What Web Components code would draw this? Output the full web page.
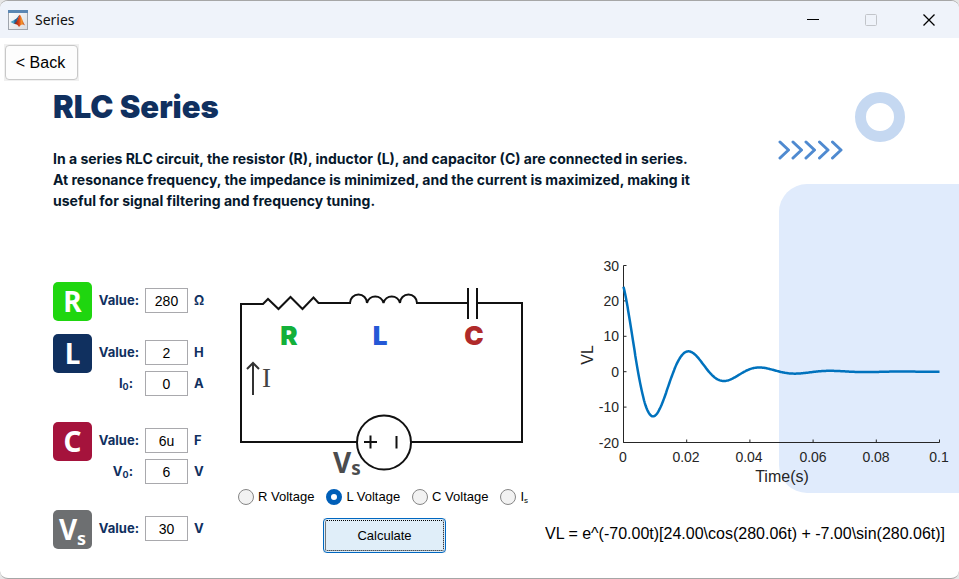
<!DOCTYPE html>
<html lang="en">
<head>
<meta charset="utf-8">
<title>Series</title>
<style>
  html, body { margin: 0; }
  body { background: #e6e6e6; font-family: "Liberation Sans", Arial, sans-serif; color: #000; }
</style>
</head>
<body>
<app-window>
  <title-bar slot="bar">Series</title-bar>
  <back-button>&lt; Back</back-button>
  <page-intro>
    <span slot="title">RLC Series</span>
    In a series RLC circuit, the resistor (R), inductor (L), and capacitor (C) are connected in series. At resonance frequency, the impedance is minimized, and the current is maximized, making it useful for signal filtering and frequency tuning.
  </page-intro>
  <rlc-workspace></rlc-workspace>
</app-window>

<script>
const define = (name, html, setup) => {
  const template = document.createElement("template");
  template.innerHTML = html;
  customElements.define(name, class extends HTMLElement {
    constructor() {
      super();
      this.attachShadow({ mode: "open" }).append(template.content.cloneNode(true));
    }
    connectedCallback() { if (setup) setup(this, this.shadowRoot); }
  });
};

define("title-bar", `
<style>
  :host { display: flex; align-items: center; height: 37px; padding-right: 1px; background: #eff3fa; font: 14px/20px "Noto Sans", sans-serif; color: #111; }
  .icon { margin: 0 7px 0 8px; }
  .name { flex: 1; }
  button { width: 58px; height: 36px; padding: 0; border: 0; background: none; display: grid; place-items: center; }
</style>
<svg class="icon" width="20" height="20" viewBox="0 0 20 20" aria-hidden="true">
  <defs>
    <linearGradient id="peak"><stop offset="0" stop-color="#7a1b12"/><stop offset=".45" stop-color="#d8431b"/><stop offset=".7" stop-color="#f59a2c"/><stop offset="1" stop-color="#b5301a"/></linearGradient>
    <linearGradient id="paper" x2="1" y2="1"><stop offset="0" stop-color="#fff"/><stop offset="1" stop-color="#d9dde2"/></linearGradient>
  </defs>
  <rect x=".5" y=".5" width="19" height="19" fill="url(#paper)" stroke="#9fa5ad"/>
  <rect x="0" y="0" width="20" height="3" fill="#5b87b3"/>
  <path d="M2.500 12 6.500 9.800 8.600 11.200 6.200 14Z" fill="#4ba3c7"/>
  <path d="M6.500 9.800C9 9 10 6 11.600 4.800L8.600 12.400 6.200 14Z" fill="#245f94"/>
  <path d="M11.600 4.800C13.200 5 14.500 11 17 15.500 15 13.800 13.200 14 11 17 10 15 8.300 13.800 6.200 14 9 13 10.400 6.500 11.600 4.800Z" fill="url(#peak)"/>
</svg>
<span class="name"><slot></slot></span>
<button aria-label="Minimize"><svg width="14" height="14"><path d="M1 6.500H13" stroke="#000"/></svg></button>
<button aria-label="Maximize" disabled><svg width="14" height="14"><rect x="1.500" y="1.500" width="11" height="11" rx="1" fill="none" stroke="#c2c5ca"/></svg></button>
<button aria-label="Close"><svg width="14" height="14"><path d="M1.500 1.500 12.500 12.500M12.500 1.500 1.500 12.500" stroke="#000" stroke-width="1.300"/></svg></button>
`);

define("app-window", `
<style>
  :host { display: flex; flex-direction: column; box-sizing: border-box; min-height: 100vh; position: relative; overflow: hidden; background: #fff; border: solid #a6a6a6; border-width: 1px 0; border-radius: 8px; }
  main { flex: 1; position: relative; padding: 6px 0 0; }
  page-backdrop { position: absolute; inset: 0; }
  .content { position: relative; }
</style>
<slot name="bar"></slot>
<main><page-backdrop></page-backdrop><div class="content"><slot></slot></div></main>
`);

define("page-backdrop", `
<style>
  .panel { position: absolute; right: 0; top: 146px; width: 180px; height: 309px; border-radius: 28px 0 0 28px; background: #e0ebfc; }
  .ring { position: absolute; right: 54px; top: 54px; width: 28px; height: 28px; border: 11px solid #c5d8f1; border-radius: 50%; }
  svg { position: absolute; right: 116px; top: 101px; }
</style>
<div class="panel"></div>
<div class="ring"></div>
<svg width="66" height="22" fill="none" stroke="#4f8ad0" stroke-width="3" stroke-linecap="round" stroke-linejoin="round" aria-hidden="true">
  <path d="M3 3 11.500 11 3 19M16 3 24.500 11 16 19M29 3 37.500 11 29 19M42.500 3 51 11 42.500 19M55.500 3 64 11 55.500 19"/>
</svg>
`);

define("back-button", `
<style>
  :host { display: block; width: 75px; margin-left: 4px; background: #f0f0f0; padding: 1px 0; }
  button { display: block; width: 73px; height: 35px; margin: 0 auto; padding: 0 2px 0 0; border: 1px solid #c8c8c8; border-radius: 4px; background: #fdfdfd; font: 16px "Liberation Sans", Arial, sans-serif; color: #000; }
</style>
<button><slot></slot></button>
`);

define("page-intro", `
<style>
  :host { display: block; padding: 7px 0 0 53px; }
  h1 { margin: 0; font: 900 31px/38px Inter, sans-serif; color: #10305f; }
  p { max-width: 648px; margin: 22px 0 0; font: 700 14px/21px Inter, sans-serif; color: #06182c; }
</style>
<h1><slot name="title"></slot></h1>
<p><slot></slot></p>
`);

define("rlc-workspace", `
<style>
  :host { display: grid; grid-template-columns: 183px 309px minmax(0, 1fr); padding: 39px 0 24px 53px; }
  .params { padding-top: 32px; }
  .params > * + * { margin-top: 26px; }
  .params > .near { margin-top: 13px; }
  .circuit { padding-top: 30px; }
</style>
<div class="params">
  <param-field color="#1fd60f" unit="Ω" value="280">R</param-field>
  <param-field class="near" color="#10305f" unit="H" value="2" initial="0" symbol="I" initial-unit="A">L</param-field>
  <param-field color="#a5133c" unit="F" value="6u" initial="6" symbol="V" initial-unit="V">C</param-field>
  <param-field color="#6d6f71" unit="V" value="30" sub="s">V</param-field>
</div>
<div class="circuit"><circuit-panel></circuit-panel></div>
<response-panel></response-panel>
`);

define("param-field", `
<style>
  :host { display: grid; grid-template-columns: 39px auto; column-gap: 6px; align-items: start; justify-content: start; font: 700 13px/25px Inter, sans-serif; color: #10305f; }
  .badge { height: 39px; border-radius: 5px; background: var(--badge); color: #fff; font: 700 28px/39px "Noto Sans", sans-serif; text-align: center; }
  .badge sub { font-size: 18px; line-height: 0; vertical-align: -5px; }
  .fields { display: grid; gap: 6px; padding-top: 6px; }
  .row { display: grid; grid-template-columns: 41px 43px auto; column-gap: 6px; justify-content: start; }
  label { text-align: right; white-space: nowrap; }
  label.short { padding-right: 6px; }
  label sub { font-size: 9px; line-height: 0; vertical-align: -2px; }
  input { box-sizing: border-box; width: 100%; height: 25px; padding: 0; border: 1px solid #a9a9ad; background: #fff; font: 14px "Liberation Sans", Arial, sans-serif; color: #000; text-align: center; border-radius: 0; }
</style>
<div class="badge"><slot></slot></div>
<div class="fields">
  <div class="row"><label for="value">Value:</label><input id="value"><span class="unit"></span></div>
</div>
`, (host, root) => {
  host.style.setProperty("--badge", host.getAttribute("color"));
  root.querySelector("input").value = host.getAttribute("value");
  root.querySelector(".unit").textContent = host.getAttribute("unit");
  if (host.hasAttribute("sub")) {
    const sub = document.createElement("sub");
    sub.textContent = host.getAttribute("sub");
    root.querySelector(".badge").append(sub);
  }
  if (host.hasAttribute("initial")) {
    const row = document.createElement("div");
    row.className = "row";
    row.innerHTML = `<label class="short" for="initial">${host.getAttribute("symbol")}<sub>0</sub>:</label><input id="initial"><span>${host.getAttribute("initial-unit")}</span>`;
    row.querySelector("input").value = host.getAttribute("initial");
    root.querySelector(".fields").append(row);
  }
});

define("circuit-panel", `
<style>
  :host { display: flex; flex-direction: column; gap: 13px; }
  .options { display: flex; gap: 12px; padding-left: 2px; font: 13px/16px "Liberation Sans", Arial, sans-serif; white-space: nowrap; }
  label { display: flex; gap: 4px; }
  label sub { font-size: 8px; line-height: 0; vertical-align: -2px; }
  input { appearance: none; box-sizing: border-box; width: 16px; height: 16px; margin: 0; border: 1px solid #868686; border-radius: 50%; background: #f2f2f2; }
  input:checked { border: 5px solid #005fb8; background: #fff; }
  .action { align-self: center; background: #f0f0f0; margin-right: 12px; }
  button { display: block; width: 123px; height: 35px; padding: 0; border: 1px solid #0067c0; border-radius: 4px; background: #e0eef9; font: 13px "Liberation Sans", Arial, sans-serif; color: #000; outline: 1px dotted #000; outline-offset: -3px; }
</style>
<circuit-diagram></circuit-diagram>
<div class="options" role="radiogroup" aria-label="Plotted quantity">
  <label><input type="radio" name="plot">R Voltage</label>
  <label><input type="radio" name="plot" checked>L Voltage</label>
  <label><input type="radio" name="plot">C Voltage</label>
  <label><input type="radio" name="plot"><span>I<sub>s</sub></span></label>
</div>
<div class="action"><button>Calculate</button></div>
`);

define("circuit-diagram", `
<style>
  :host { display: block; }
  svg { display: block; width: 100%; overflow: visible; }
  .name { font: 900 26px Inter, sans-serif; text-anchor: middle; }
</style>
<svg viewBox="236 280 309 196" role="img" aria-label="Series RLC circuit">
  <g fill="none" stroke="#111" stroke-width="2">
    <path d="M357 442H241V304H263L268 299 278.500 309 290.500 297 302.500 309 313.500 297.500 318.500 303H350A8.500 8.500 0 0 1 367 303A8.500 8.500 0 0 1 383.500 303A8.500 8.500 0 0 1 400 303A8.500 8.500 0 0 1 417 303H467"/>
    <path d="M478 303H522V442H411M468 288V319M477 288V319"/>
    <circle cx="384" cy="442.500" r="27"/>
    <path d="M364 442H377M370.500 435.500V448.500M396.500 436V448.500"/>
    <path d="M253 395V363M247 369 253 363 259 369" stroke="#333"/>
  </g>
  <text class="name" x="289" y="345" fill="#13b03a">R</text>
  <text class="name" x="380" y="345" fill="#2458d6">L</text>
  <text class="name" x="474" y="345" fill="#b02a2a">C</text>
  <text x="262" y="387" font-family="Liberation Serif, serif" font-size="27" fill="#444">I</text>
  <text x="333" y="473" font-family="Noto Sans, sans-serif" font-weight="700" font-size="28" fill="#4b4c4e">V<tspan font-size="19" dy="2">s</tspan></text>
</svg>
`);

define("response-panel", `
<style>
  :host { display: flex; flex-direction: column; gap: 34px; min-width: 0; overflow: hidden; }
  output { font: 16px/20px "Liberation Sans", Arial, sans-serif; white-space: nowrap; }
</style>
<response-chart></response-chart>
<output>VL = e^(-70.00t)[24.00\\cos(280.06t) + -7.00\\sin(280.06t)]</output>
`);

define("response-chart", `
<style>
  :host { display: block; }
  svg { display: block; width: 100%; font: 14px "Liberation Sans", Arial, sans-serif; fill: #262626; }
  .axis { fill: none; stroke: #262626; }
  .curve { fill: none; stroke: #0072bd; stroke-width: 2.5; stroke-linejoin: round; }
  .title { font-size: 16px; text-anchor: middle; }
</style>
<svg viewBox="0 0 414 240" role="img" aria-label="VL over time"></svg>
`, (host, root) => {
  const left = 78.5, top = 15.5, width = 316, height = 177;
  const px = t => left + t / 0.1 * width;
  const py = v => top + (30 - v) / 50 * height;
  let axis = `M${left} ${top}V${top + height}H${left + width}`, texts = "";
  for (let v = -20; v <= 30; v += 10) {
    axis += `M${left} ${py(v)}h3`;
    texts += `<text x="74" y="${Math.round(py(v)) + 5}" text-anchor="end">${v}</text>`;
  }
  for (const t of [0, 0.02, 0.04, 0.06, 0.08, 0.1]) {
    axis += `M${px(t)} ${top + height}v-3`;
    texts += `<text x="${Math.floor(px(t))}" y="212" text-anchor="middle">${t}</text>`;
  }
  const points = [];
  for (let i = 0; i <= 400; i++) {
    const t = i / 4000, w = 280.06 * t;
    points.push(px(t).toFixed(1) + "," + py(Math.exp(-70 * t) * (24 * Math.cos(w) - 7 * Math.sin(w))).toFixed(2));
  }
  root.querySelector("svg").innerHTML = `<path class="axis" d="${axis}"/>${texts}
    <text class="title" x="237" y="232">Time(s)</text>
    <text class="title" transform="translate(48 105) rotate(-90)">VL</text>
    <polyline class="curve" points="${points.join(" ")}"/>`;
});
</script>
</body>
</html>
